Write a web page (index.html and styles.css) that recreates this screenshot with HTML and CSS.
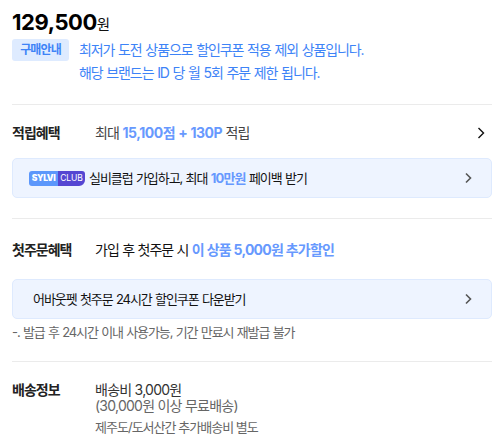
FILE: index.html
```html
<!DOCTYPE html>
<html lang="ko">
<head>
  <meta charset="UTF-8">
  <title>상품 정보</title>
  <link rel="stylesheet" href="styles.css">
</head>
<body>
<div class="product">
  <div class="price"><strong>129,500</strong><span>원</span></div>
  <div class="notice">
    <span class="tag">구매안내</span>
    <div class="notice-text">
      <p>최저가 도전 상품으로 할인쿠폰 적용 제외 상품입니다.</p>
      <p>해당 브랜드는 ID 당 월 5회 주문 제한 됩니다.</p>
    </div>
  </div>

  <section class="point">
    <div class="row">
      <h3>적립혜택</h3>
      <p class="gray">최대 <b>15,100점 + 130P</b> 적립</p>
      <svg class="arrow" width="8" height="12" viewBox="0 0 8 12"><path d="M1.5 1 6.5 6 1.5 11"/></svg>
    </div>
    <a class="banner club">
      <span class="logo"><i>SYLVI</i><em>CLUB</em></span>
      <span class="banner-text">실비클럽 가입하고, 최대 <b>10만원</b> 페이백 받기</span>
      <svg class="arrow" width="8" height="12" viewBox="0 0 8 12"><path d="M2 1.5 6.5 6 2 10.5"/></svg>
    </a>
  </section>

  <section class="first">
    <div class="row">
      <h3>첫주문혜택</h3>
      <p>가입 후 첫주문 시 <b>이 상품 5,000원 추가할인</b></p>
    </div>
    <a class="banner coupon">
      <span class="banner-text">어바웃펫 첫주문 24시간 할인쿠폰 다운받기</span>
      <svg class="arrow" width="8" height="12" viewBox="0 0 8 12"><path d="M2 1.5 6.5 6 2 10.5"/></svg>
    </a>
    <p class="desc">-. 발급 후 24시간 이내 사용가능, 기간 만료시 재발급 불가</p>
  </section>

  <section class="delivery">
    <div class="row">
      <h3>배송정보</h3>
      <div class="fee">
        <p>배송비 3,000원</p>
        <p class="free">(30,000원 이상 무료배송)</p>
        <p class="extra">제주도/도서산간 추가배송비 별도</p>
      </div>
    </div>
  </section>
</div>
</body>
</html>
```

FILE: styles.css
```css
* { box-sizing: border-box; }
body {
  margin: 0;
  background: #fff;
  color: #111;
  font-family: Inter, "Noto Sans CJK KR", sans-serif;
  font-size: 14px;
  line-height: 20px;
  letter-spacing: -0.8px;
  word-spacing: 0.2px;
}
h3, p { margin: 0; }
.product {
  padding: 10px 10px 0 12px;
  white-space: nowrap;
}
.price {
  display: flex;
  align-items: baseline;
  height: 28px;
  line-height: 25px;
}
.price strong {
  font-size: 22px;
  letter-spacing: -0.45px;
  color: #000;
}
.price span { font-size: 14.5px; }
.notice {
  display: flex;
  gap: 10px;
  height: 66px;
  color: #3d83f7;
}
.tag {
  width: 57px;
  height: 22px;
  margin-top: 1px;
  border-radius: 3px;
  background: #deebff;
  font-size: 12px;
  font-weight: bold;
  line-height: 22px;
  letter-spacing: -0.9px;
  text-align: center;
}
.notice-text {
  line-height: 23px;
  letter-spacing: -1.1px;
  word-spacing: 0.9px;
}
section {
  border-top: 1px solid #ebebeb;
}
.row {
  display: flex;
  align-items: flex-start;
}
.row h3 {
  width: 83px;
  font-size: 14px;
  letter-spacing: -1px;
  color: #222;
}
.row .arrow {
  margin: 4px 7px 0 auto;
}
b { color: #6799fe; }
.gray { color: #444; }
.gray b { letter-spacing: -0.45px; }
.arrow {
  fill: none;
  stroke: #111;
  stroke-width: 1.4;
}
.point {
  height: 114px;
  padding-top: 18px;
}
.first {
  height: 143px;
  padding-top: 21px;
}
.first .row p { letter-spacing: -0.9px; }
.first .row b { letter-spacing: -0.78px; }
.delivery { padding-top: 18px; }
.banner {
  display: flex;
  align-items: center;
  height: 40px;
  padding: 0 19px 0 16px;
  border: 1px solid #deeafe;
  border-radius: 5px;
  background: #eef4ff;
  font-size: 13px;
  letter-spacing: -1.05px;
  word-spacing: 0.7px;
}
.banner b { letter-spacing: -0.85px; }
.banner .arrow {
  margin-left: auto;
  stroke: #555;
  stroke-width: 1.6;
}
.club { margin-top: 15px; }
.coupon {
  margin-top: 19px;
  padding-left: 20px;
  letter-spacing: -1.06px;
}
.coupon .banner-text { margin-top: -1px; }
.logo {
  display: flex;
  width: 56px;
  height: 15px;
  margin-right: 4px;
  border-radius: 3px 3px 6px 3px;
  overflow: hidden;
  color: #fff;
  font-size: 8.5px;
  line-height: 15px;
  letter-spacing: -0.1px;
  text-align: center;
}
.logo i {
  width: 29px;
  background: #5c97fb;
  font-style: normal;
  font-weight: 900;
  letter-spacing: -0.4px;
}
.logo em {
  flex: 1;
  background: #5546d2;
  font-style: normal;
}
.desc {
  margin-top: 3px;
  font-size: 13px;
  letter-spacing: -1.1px;
  word-spacing: 0.8px;
  color: #666;
}
.fee {
  color: #333;
  letter-spacing: -0.75px;
  word-spacing: 0;
}
.fee p { line-height: 16px; }
.fee p:first-child { margin-top: 2px; }
.fee .free { color: #666; }
.fee .extra {
  margin-top: 5px;
  font-size: 13px;
  letter-spacing: -0.98px;
  color: #666;
}
```
